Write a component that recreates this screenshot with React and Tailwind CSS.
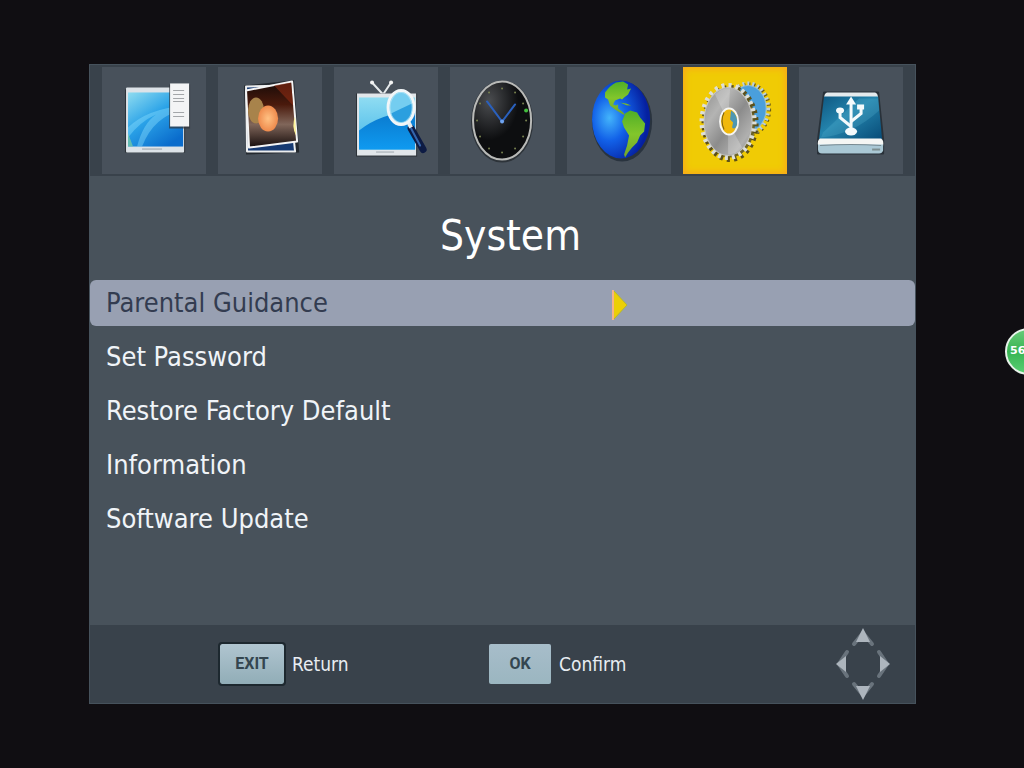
import React, { useState } from 'react';

const ProgramIcon = () => (
  <svg viewBox="0 0 104 106" className="w-full h-full" aria-hidden="true">
    <defs>
      <linearGradient id="programSky" x1="0" y1="0" x2="0.7" y2="1">
        <stop offset="0" stopColor="#8fdcf0" />
        <stop offset="0.5" stopColor="#2ba3e8" />
        <stop offset="1" stopColor="#0a6ccc" />
      </linearGradient>
    </defs>
    <rect x="23" y="22" width="60" height="63" fill="#2c3238" />
    <rect x="24" y="20" width="58" height="65" rx="1" fill="#dde3e8" />
    <rect x="26" y="25" width="55" height="54" fill="url(#programSky)" />
    <path d="M26 60 Q44 42 81 38 L81 43 Q52 48 40 79 L35 79 Q41 56 54 47 Q38 54 26 70 Z" fill="#8fe2ff" opacity="0.4" />
    <path d="M26 66 L31 79 H26 Z" fill="#7fcf9c" opacity="0.7" />
    <rect x="40" y="81" width="20" height="1" fill="#9aa2a9" />
    <rect x="67" y="17" width="21" height="44" fill="#30363c" opacity="0.7" />
    <rect x="68" y="16" width="19" height="43" fill="#f3f4f5" />
    <path d="M71 23H82M71 27H82M71 31H82M71 34H82M71 45H82M71 49H82" stroke="#a3a6a9" />
  </svg>
);

const PictureIcon = () => (
  <svg viewBox="0 0 104 106" className="w-full h-full" aria-hidden="true">
    <defs>
      <linearGradient id="photo" x1="0" y1="0" x2="0" y2="1">
        <stop offset="0" stopColor="#160a08" />
        <stop offset="0.35" stopColor="#4a1a0c" />
        <stop offset="0.65" stopColor="#80665a" />
        <stop offset="1" stopColor="#150c0b" />
      </linearGradient>
      <radialGradient id="flare">
        <stop offset="0" stopColor="#ffc183" />
        <stop offset="1" stopColor="#ee8a4c" />
      </radialGradient>
    </defs>
    <path d="M27 19 L75 14 L80 84 L29 86 Z" fill="#24292f" stroke="#24292f" strokeWidth="2" />
    <path d="M28 19 L70 18 L77 84 L29 84 Z" fill="#173a72" stroke="#eceef0" strokeWidth="2" strokeLinejoin="round" />
    <path d="M28 23 L74 14 L79 74 L31 80 Z" fill="url(#photo)" stroke="#f4f4f4" strokeWidth="2" strokeLinejoin="round" />
    <path d="M56 18 L73 15 L75 38 Z" fill="#8d2c12" opacity="0.6" />
    <ellipse cx="38" cy="43" rx="8" ry="13" fill="#a8834b" />
    <ellipse cx="50" cy="51" rx="10" ry="13" fill="url(#flare)" />
    <path d="M77 49 Q73 59 78 68 Z" fill="#fff59a" />
  </svg>
);

const SearchIcon = () => (
  <svg viewBox="0 0 104 106" className="w-full h-full" aria-hidden="true">
    <defs>
      <linearGradient id="searchSky" x1="0" y1="0" x2="0" y2="1">
        <stop offset="0" stopColor="#8fdcf2" />
        <stop offset="1" stopColor="#42b6e8" />
      </linearGradient>
      <linearGradient id="searchSea" x1="0" y1="0" x2="0" y2="1">
        <stop offset="0" stopColor="#0a78cc" />
        <stop offset="1" stopColor="#0f9af0" />
      </linearGradient>
    </defs>
    <path d="M38 15 L49 27 M57 15 L49 27" stroke="#e6eaec" strokeWidth="2" />
    <circle cx="38" cy="15" r="2" fill="#f4f4f4" />
    <circle cx="57" cy="15" r="2" fill="#f4f4f4" />
    <rect x="22" y="26" width="61" height="63" fill="#2c3238" />
    <rect x="23" y="26" width="59" height="62" fill="#e1e6ea" />
    <rect x="25" y="30" width="56" height="52" fill="url(#searchSky)" />
    <path d="M25 63 Q46 46 81 43 V82 H25 Z" fill="url(#searchSea)" />
    <rect x="42" y="84" width="18" height="1" fill="#a0a8ae" />
    <path d="M77 61 L89 82" stroke="#0d1b44" strokeWidth="7" strokeLinecap="round" />
    <path d="M77 61 L86 78" stroke="#3566ae" strokeWidth="2" strokeLinecap="round" />
    <path d="M74 54 L77 60" stroke="#e8edf0" strokeWidth="4" />
    <ellipse cx="67" cy="40" rx="13" ry="17" fill="#74cdf0" stroke="#f2f6f8" strokeWidth="3" />
    <path d="M57 46 Q65 42 78 36 Q79 54 67 55 Q59 54 57 46 Z" fill="#2b9fdf" />
    <ellipse cx="67" cy="40" rx="11" ry="15" fill="none" stroke="#c2ebf8" opacity="0.6" />
  </svg>
);

const hourMarks = [
  [52, 21], [65, 25], [73, 36], [76, 53], [73, 69], [65, 81],
  [52, 85], [39, 81], [30, 69], [27, 53], [30, 36], [39, 25],
];

const ClockIcon = () => (
  <svg viewBox="0 0 104 106" className="w-full h-full" aria-hidden="true">
    <defs>
      <radialGradient id="clockFace" cx="0.28" cy="0.25" r="0.5">
        <stop offset="0" stopColor="#4b4d50" />
        <stop offset="1" stopColor="#0d0e10" />
      </radialGradient>
    </defs>
    <ellipse cx="52" cy="54" rx="31" ry="41" fill="#2d3339" />
    <ellipse cx="52" cy="53" rx="29" ry="39" fill="url(#clockFace)" stroke="#b9bab8" strokeWidth="2" />
    {hourMarks.map(([x, y]) => (
      <circle key={`${x}-${y}`} cx={x} cy={y} r="1" fill="#77804f" />
    ))}
    <circle cx="76" cy="43" r="2" fill="#43bd3e" />
    <path d="M37 34 L52 54 L65 37" fill="none" stroke="#2a60bd" strokeWidth="2" strokeLinecap="round" />
    <circle cx="52" cy="54" r="2" fill="#6fa3ef" />
  </svg>
);

const GlobeIcon = () => (
  <svg viewBox="0 0 104 106" className="w-full h-full" aria-hidden="true">
    <defs>
      <radialGradient id="ocean" cx="0.3" cy="0.48" r="0.65">
        <stop offset="0" stopColor="#43b4fb" />
        <stop offset="0.45" stopColor="#1261e8" />
        <stop offset="1" stopColor="#0520a0" />
      </radialGradient>
      <linearGradient id="land" x1="0" y1="0" x2="0" y2="1">
        <stop offset="0" stopColor="#4fae27" />
        <stop offset="0.5" stopColor="#82c62b" />
        <stop offset="1" stopColor="#74a52b" />
      </linearGradient>
    </defs>
    <ellipse cx="55" cy="54" rx="30" ry="40" fill="#29333e" />
    <ellipse cx="54" cy="52" rx="29" ry="39" fill="url(#ocean)" />
    <g fill="url(#land)">
      <path d="M38 25 Q43 18 49 15 L56 14 L61 17 L60 22 L64 21 L61 27 L57 30 L55 32 L53 31 L48 33 L46 37 L49 38 L51 37 L51 41 L55 44 L58 47 L56 47 L48 42 L43 38 L41 32 L38 30 Z" />
      <path d="M53 35 L59 36 L64 38 L60 38 Z" />
      <path d="M58 46 L63 43 L70 45 L73 50 L78 56 L77 64 L73 68 L70 75 L65 80 L61 85 L58 90 L57 87 L60 78 L62 68 L57 60 L55 54 Z" />
    </g>
  </svg>
);

const GearIcon = () => (
  <svg viewBox="0 0 104 106" className="w-full h-full" aria-hidden="true">
    <defs>
      <linearGradient id="steel" x1="0" y1="0" x2="1" y2="1">
        <stop offset="0" stopColor="#8e8e8d" />
        <stop offset="0.3" stopColor="#b4b4b3" />
        <stop offset="0.55" stopColor="#8c8c8c" />
        <stop offset="0.8" stopColor="#b0b0af" />
        <stop offset="1" stopColor="#868686" />
      </linearGradient>
    </defs>
    <ellipse cx="66" cy="42" rx="20" ry="25" fill="none" stroke="#6b5c14" strokeWidth="4" strokeDasharray="2 3" />
    <ellipse cx="65" cy="41" rx="20" ry="25" fill="none" stroke="#bdd2da" strokeWidth="4" strokeDasharray="2 3" />
    <ellipse cx="65" cy="41" rx="18" ry="23" fill="#4a9fdc" stroke="#93bcd4" />
    <ellipse cx="47" cy="55" rx="25" ry="35" fill="#6e6428" />
    <ellipse cx="47" cy="56" rx="26" ry="36" fill="none" stroke="#5c501a" strokeWidth="5" strokeDasharray="3 4" />
    <ellipse cx="45" cy="54" rx="26" ry="36" fill="none" stroke="#dedfd9" strokeWidth="5" strokeDasharray="3 4" />
    <ellipse cx="45" cy="54" rx="24" ry="34" fill="url(#steel)" stroke="#c6c6c3" />
    <path d="M45 54 L32 27 Q39 20 47 21 Z M45 54 L59 80 Q53 87 45 87 Z" fill="#f2f2f2" opacity="0.25" />
    <ellipse cx="46" cy="54" rx="9" ry="13" fill="#f0b80b" stroke="#f6f6f3" strokeWidth="2" />
    <path d="M48 43 Q55 47 54 57 Q52 63 49 60 L50 55 L47 52 Z" fill="#4e97b3" />
    <path d="M41 45 Q37 53 41 62" fill="none" stroke="#775d13" />
  </svg>
);

const UsbIcon = () => (
  <svg viewBox="0 0 104 106" className="w-full h-full" aria-hidden="true">
    <defs>
      <linearGradient id="drive" x1="0" y1="0" x2="1" y2="1">
        <stop offset="0" stopColor="#0d5680" />
        <stop offset="0.45" stopColor="#2484ad" />
        <stop offset="1" stopColor="#074b77" />
      </linearGradient>
    </defs>
    <path d="M25 25 H79 L84 72 V86 H19 V72 Z" fill="#293139" stroke="#293139" strokeWidth="2" strokeLinejoin="round" />
    <path d="M28 25 H76 Q79 26 79 31 H25 Q25 26 28 25 Z" fill="#e4eaed" />
    <path d="M25 29 H79 L83 72 H20 Z" fill="url(#drive)" />
    <path d="M24 65 L60 31 H79 L80 43 Q54 67 22 70 Z" fill="#5ab6d3" opacity="0.25" />
    <path d="M21 71 H82 Q85 73 84 78 H19 Q18 73 21 71 Z" fill="#f5f6f4" />
    <path d="M19 77 H84 V83 Q83 86 80 86 H23 Q19 86 19 82 Z" fill="#aac8d5" />
    <path d="M21 78 Q52 76 82 78" fill="none" stroke="#788a92" />
    <path d="M73 82 H81" stroke="#7d8f91" strokeWidth="2" />
    <g fill="none" stroke="#f4fafc" strokeWidth="3">
      <path d="M52 36 V63" />
      <path d="M41 44 V50 L52 59" />
      <path d="M62 40 V46 L52 54" />
    </g>
    <g fill="#f4fafc">
      <path d="M52 29 L57 37 H47 Z" />
      <ellipse cx="41" cy="43" rx="4" ry="3" />
      <rect x="58" y="37" width="7" height="5" />
      <ellipse cx="52" cy="64" rx="6" ry="4" />
    </g>
  </svg>
);

const DirectionPad = () => (
  <svg viewBox="0 0 56 74" className="w-14 h-[74px]" aria-hidden="true">
    <g fill="none" stroke="#69737c" strokeWidth="4" strokeLinecap="round">
      <path d="M19 17 L28 6 L37 17" />
      <path d="M19 57 L28 68 L37 57" />
      <path d="M12 25 L4 37 L12 49" />
      <path d="M44 25 L52 37 L44 49" />
    </g>
    <g fill="#adb5bd">
      <path d="M28 1 L35 15 H21 Z" />
      <path d="M28 73 L35 59 H21 Z" />
      <path d="M1 37 L11 29 V45 Z" />
      <path d="M55 37 L45 29 V45 Z" />
    </g>
  </svg>
);

const tabs = [
  { name: 'Program', Icon: ProgramIcon },
  { name: 'Picture', Icon: PictureIcon },
  { name: 'Channel Search', Icon: SearchIcon },
  { name: 'Time', Icon: ClockIcon },
  { name: 'Option', Icon: GlobeIcon },
  { name: 'System', Icon: GearIcon },
  { name: 'USB', Icon: UsbIcon },
];

const items = [
  'Parental Guidance',
  'Set Password',
  'Restore Factory Default',
  'Information',
  'Software Update',
];

const App = () => {
  const [selected, setSelected] = useState(0);

  return (
    <div className="relative min-h-screen overflow-hidden bg-[#100e12] pl-[89px] pr-[108px] py-16 flex flex-col font-['DejaVu_Sans_Condensed','DejaVu_Sans',sans-serif]">
      <main className="flex-1 flex flex-col bg-[#48525b] border border-[#46525c]">
        <nav className="flex gap-3 bg-[#39424b] px-3 py-0.5">
          {tabs.map(({ name, Icon }) => (
            <button
              key={name}
              aria-label={name}
              className={`flex-1 min-w-0 h-[107px] ${name === 'System'
                ? 'bg-[#f0cb05] shadow-[inset_0_0_6px_2px_#f9a91a]'
                : 'bg-[#48515b]'}`}
            >
              <Icon />
            </button>
          ))}
        </nav>

        <h1 className="pt-8 pb-4 pl-4 text-center text-[42px] leading-14 text-white">System</h1>

        <ul className="flex-1 flex flex-col gap-2">
          {items.map((item, index) => (
            <li key={item}>
              <button
                onClick={() => setSelected(index)}
                className={`w-full h-[46px] grid grid-cols-[63fr_37fr] items-center rounded-md text-left text-[27px] 
                  ${index === selected ? 'bg-[#98a0b2] text-[#333c50]' : 'text-[#f0f4f8]'}`}
              >
                <span className="pl-4">{item}</span>
                {index === selected && (
                  <svg viewBox="0 0 16 32" className="w-4 h-8 mt-1 ml-0.5" aria-hidden="true">
                    <path d="M1 1 L15 16 L1 31 Z" fill="#ebcf07" />
                    <path d="M1 1 V31" stroke="#f5b489" strokeWidth="2" />
                    <path d="M2 2 L15 16 L2 30" fill="none" stroke="#b5b92b" />
                  </svg>
                )}
              </button>
            </li>
          ))}
        </ul>

        <footer className="h-[78px] grid grid-cols-[7fr_9fr_auto] items-center bg-[#39424b] pl-[130px] pr-6 text-[19px] text-[#e8edf2]">
          <div className="flex items-center gap-2">
            <button className="w-16 h-10 rounded-xs bg-linear-to-b from-[#b0c5d0] to-[#91adb7] outline-2 outline-[#1d282f] font-[Roboto,sans-serif] text-[16px] font-bold text-[#344650]">
              EXIT
            </button>
            <span>Return</span>
          </div>
          <div className="flex items-center gap-2">
            <button className="w-[62px] h-10 rounded-xs bg-linear-to-b from-[#a7bdca] to-[#9bb6c0] font-[Roboto,sans-serif] text-[16px] font-bold text-[#344650]">
              OK
            </button>
            <span>Confirm</span>
          </div>
          <DirectionPad />
        </footer>
      </main>

      <div className="absolute top-[328px] -right-7 w-[47px] h-[47px] rounded-full border-2 border-[#e8f3ea] bg-linear-to-b from-[#67cb79] via-[#38b453] to-[#58cf72] pl-[3px] flex items-center font-['DejaVu_Sans',sans-serif] text-[11px] font-bold text-white">
        56
      </div>
    </div>
  );
};

export default App;
